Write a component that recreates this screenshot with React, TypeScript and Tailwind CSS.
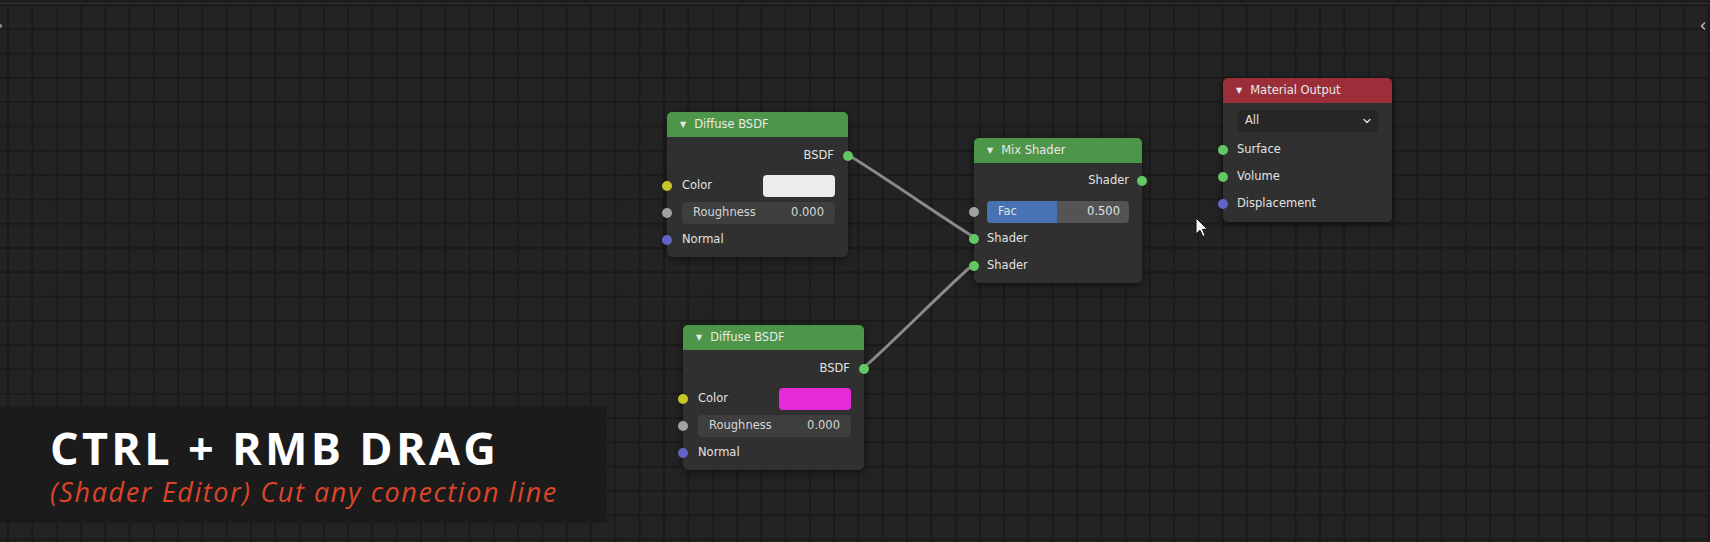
import { ChevronDown, ChevronLeft, ChevronRight } from "lucide-react";

type Sock = "green" | "yellow" | "grey" | "purple";

const sockColor: Record<Sock, string> = {
  green: "bg-[#63c763]",
  yellow: "bg-[#c7c729]",
  grey: "bg-[#a1a1a1]",
  purple: "bg-[#6363c7]",
};

const Socket = ({ color, side }: { color: Sock; side: "in" | "out" }) => (
  <span
    className={`absolute top-1/2 -translate-y-1/2 w-[10px] h-[10px] rounded-full ${sockColor[color]} ${
      side === "in" ? "left-[-5px]" : "right-[-5px]"
    }`}
  />
);

const Header = ({ title, red }: { title: string; red?: boolean }) => (
  <div
    className={`h-[25px] rounded-t-[5px] flex items-center gap-[8px] pl-[13px] text-[#e8e8e8] ${
      red ? "bg-[#9b2e38]" : "bg-[#4d9549]"
    }`}
  >
    <span className="text-[8px] leading-none">▼</span>
    <span>{title}</span>
  </div>
);

const Node = ({
  x,
  y,
  w,
  children,
}: {
  x: string;
  y: string;
  w: string;
  children: React.ReactNode;
}) => (
  <div
    className={`absolute ${x} ${y} ${w} bg-[#303030] rounded-[5px] shadow-[0_2px_8px_rgba(0,0,0,0.55)] text-[11.5px] text-[#e2e2e2]`}
  >
    {children}
  </div>
);

// a socket row: label on one side, optional widget, socket on the edge
const Row = ({
  sock,
  side = "in",
  className = "",
  children,
}: {
  sock: Sock;
  side?: "in" | "out";
  className?: string;
  children: React.ReactNode;
}) => (
  <div
    className={`relative h-[22px] flex items-center ${
      side === "out" ? "justify-end" : "justify-between"
    } ${className}`}
  >
    {children}
    <Socket color={sock} side={side} />
  </div>
);

const Diffuse = ({ x, y, swatch }: { x: string; y: string; swatch: string }) => (
  <Node x={x} y={y} w="w-[181px]">
    <Header title="Diffuse BSDF" />
    <div className="pt-[8px] pb-[6px] flex flex-col">
      <Row sock="green" side="out" className="pr-[14px] mb-[8px]">
        BSDF
      </Row>
      <div className="flex flex-col gap-[5px]">
        <Row sock="yellow" className="pl-[15px] pr-[13px]">
          <span>Color</span>
          <div className={`w-[72px] h-[22px] rounded-[4px] ${swatch}`} />
        </Row>
        <Row sock="grey" className="pl-[15px] pr-[13px]">
          <div className="h-full flex-1 rounded-[4px] bg-[#3e3e3e] flex items-center justify-between px-[11px] text-[#d6d6d6]">
            <span>Roughness</span>
            <span>0.000</span>
          </div>
        </Row>
        <Row sock="purple" className="pl-[15px]">
          <span>Normal</span>
        </Row>
      </div>
    </div>
  </Node>
);

export default function App() {
  return (
    <div
      className="relative w-[1710px] h-[542px] overflow-hidden bg-[#232323] bg-[linear-gradient(to_right,#1a1a1a_2px,transparent_2px),linear-gradient(to_bottom,#1a1a1a_2px,transparent_2px)] bg-[size:24.3px_24.3px] bg-[position:7px_4px]"
      style={{ fontFamily: '"DejaVu Sans", sans-serif' }}
    >
      <div className="absolute left-0 top-0 w-full h-[4px] bg-[#1d1d1d] border-b border-[#333]" />
      <ChevronRight className="absolute left-[-6px] top-[20px] text-[#9a9a9a]" size={12} strokeWidth={3} />
      <ChevronLeft className="absolute right-[1px] top-[20px] text-[#b8b8b8]" size={12} strokeWidth={3} />

      <svg className="absolute inset-0" width={1710} height={542}>
        <path d="M848 155 C 862 162, 958 228, 974 237" stroke="#8b8b8b" strokeWidth={3} fill="none" />
        <path d="M863 368 C 877 358, 960 274, 974 264" stroke="#8b8b8b" strokeWidth={3} fill="none" />
      </svg>

      <Diffuse x="left-[667px]" y="top-[112px]" swatch="bg-[#ececec]" />
      <Diffuse x="left-[683px]" y="top-[325px]" swatch="bg-[#e42bd7]" />

      <Node x="left-[974px]" y="top-[138px]" w="w-[168px]">
        <Header title="Mix Shader" />
        <div className="pt-[7px] pb-[6px] flex flex-col">
          <Row sock="green" side="out" className="pr-[13px] mb-[9px]">
            Shader
          </Row>
          <div className="flex flex-col gap-[5px]">
            <Row sock="grey" className="px-[13px]">
              <div className="h-full flex-1 rounded-[4px] bg-[#545454] flex overflow-hidden">
                <div className="w-[70px] bg-[#4772b3] flex items-center pl-[11px]">Fac</div>
                <div className="flex-1 flex items-center justify-end pr-[9px]">0.500</div>
              </div>
            </Row>
            <Row sock="green" className="pl-[13px]">
              Shader
            </Row>
            <Row sock="green" className="pl-[13px]">
              Shader
            </Row>
          </div>
        </div>
      </Node>

      <Node x="left-[1223px]" y="top-[78px]" w="w-[169px]">
        <Header title="Material Output" red />
        <div className="pt-[7px] pb-[7px] flex flex-col gap-[5px]">
          <div className="h-[22px] mx-[14px] mb-[2px] rounded-[4px] bg-[#272727] flex items-center justify-between pl-[8px] pr-[5px]">
            All
            <ChevronDown size={12} strokeWidth={2.5} />
          </div>
          <Row sock="green" className="pl-[14px]">
            Surface
          </Row>
          <Row sock="green" className="pl-[14px]">
            Volume
          </Row>
          <Row sock="purple" className="pl-[14px]">
            Displacement
          </Row>
        </div>
      </Node>

      <svg className="absolute left-[1195px] top-[217px]" width={14} height={21} viewBox="-1 -1 14 21">
        <path d="M0 0 L0 16 L4 12.3 L6.8 18.5 L9.2 17.4 L6.5 11.3 L11.5 11.3 Z" fill="#f4f4f4" stroke="#111" strokeWidth={1} />
      </svg>

      <div
        className="absolute left-0 top-[406px] w-[607px] h-[117px] bg-[#1b1b1b] pl-[50px] pt-[19px] flex flex-col gap-[8px]"
        style={{ fontFamily: '"Open Sans", sans-serif' }}
      >
        <div className="text-white font-bold text-[45px] leading-[45px] tracking-[3.3px]">CTRL + RMB DRAG</div>
        <div className="text-[#dc4528] italic text-[27px] leading-[27px] tracking-[1.6px]">
          (Shader Editor) Cut any conection line
        </div>
      </div>
    </div>
  );
}
